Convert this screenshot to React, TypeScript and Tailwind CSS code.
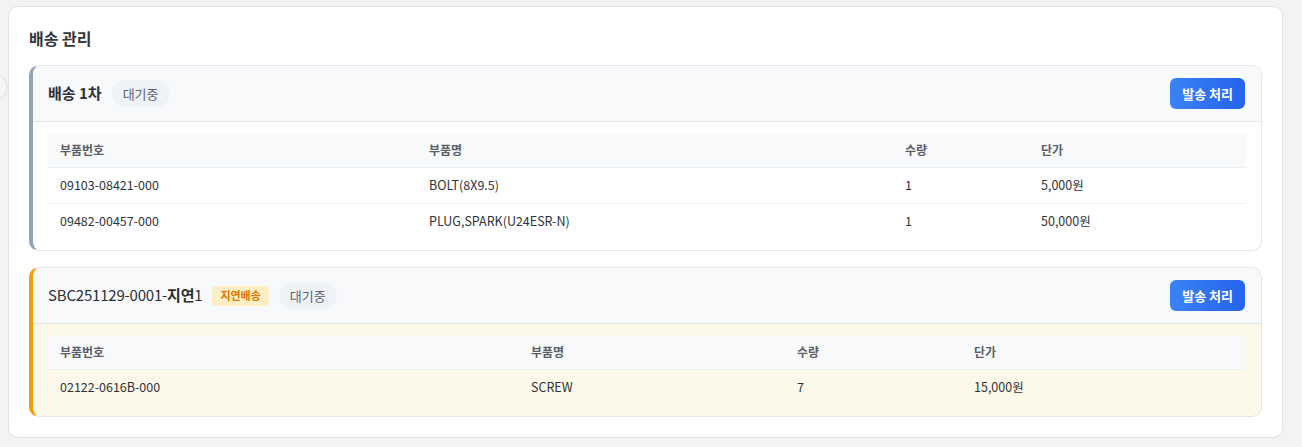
import React from 'react';

type Item = {
  partNo: string;
  name: string;
  qty: number;
  price: string;
};

type Shipment = {
  title: string;
  delayed?: boolean;
  cols: string[];
  items: Item[];
};

const shipments: Shipment[] = [
  {
    title: '배송 1차',
    cols: ['w-[369px]', 'w-[476px]', 'w-[136px]', ''],
    items: [
      { partNo: '09103-08421-000', name: 'BOLT(8X9.5)', qty: 1, price: '5,000원' },
      { partNo: '09482-00457-000', name: 'PLUG,SPARK(U24ESR-N)', qty: 1, price: '50,000원' }
    ]
  },
  {
    title: 'SBC251129-0001-지연1',
    delayed: true,
    cols: ['w-[471px]', 'w-[266px]', 'w-[177px]', ''],
    items: [{ partNo: '02122-0616B-000', name: 'SCREW', qty: 7, price: '15,000원' }]
  }
];

// hangul parts come out bold, latin/digits stay regular (as the fallback font does)
const Title = ({ text, mixed }: { text: string; mixed?: boolean }) => {
  if (!mixed) {
    return <span className="text-[15px] font-semibold text-[#2b2f36]">{text}</span>;
  }
  const parts = text.split(/([가-힣]+)/).filter(Boolean);
  return (
    <span className="text-[15px] text-[#2b2f36] tracking-[-0.2px]">
      {parts.map((p, i) => (
        <span key={i} className={/[가-힣]/.test(p) ? 'font-bold' : 'font-normal'}>
          {p}
        </span>
      ))}
    </span>
  );
};

const ShipmentCard = ({ s }: { s: Shipment }) => {
  return (
    <div
      className={
        'overflow-hidden rounded-[10px] border border-[#e3e6ea] border-l-4 ' +
        (s.delayed ? 'border-l-[#f59e0b] bg-[#fdf9ea]' : 'border-l-[#94a3b8] bg-white')
      }
    >
      {/* header */}
      <div className="flex h-[56px] items-center justify-between border-b border-[#e3e6ea] bg-[#f8f9fb] pl-[15px] pr-[16px]">
        <div className="flex items-center gap-[10px]">
          <Title text={s.title} mixed={s.delayed} />
          {s.delayed && (
            <span className="flex h-[20px] items-center rounded-[4px] bg-[#fdefc3] px-[8px] text-[11px] font-bold text-[#d97706]">
              지연배송
            </span>
          )}
          <span className="flex h-[27px] items-center rounded-full bg-[#eff2f7] px-[11px] text-[13px] text-[#5b6370]">
            대기중
          </span>
        </div>
        <button className="h-[31px] rounded-[6px] bg-gradient-to-r from-[#3b82f6] to-[#2563eb] px-[12px] text-[13px] font-bold text-white">
          발송 처리
        </button>
      </div>

      {/* items */}
      <div className="px-[15px] pt-[12px] pb-[11px]">
        <table className="w-full border-collapse text-left">
          <thead>
            <tr className="h-[33px] border-b border-[#edf0f3] bg-[#f8f9fb]">
              {['부품번호', '부품명', '수량', '단가'].map((h, i) => (
                <th key={h} className={'px-3 text-[12px] font-semibold text-[#5a5f66] ' + s.cols[i]}>
                  {h}
                </th>
              ))}
            </tr>
          </thead>
          <tbody>
            {s.items.map((it, idx) => (
              <tr
                key={it.partNo}
                className={
                  'h-[36px] text-[12.5px] text-[#2f3338] ' +
                  (idx < s.items.length - 1 ? 'border-b border-[#edf0f3]' : '')
                }
              >
                <td className="px-3">{it.partNo}</td>
                <td className="px-3">{it.name}</td>
                <td className="px-3">{it.qty}</td>
                <td className="px-3">{it.price}</td>
              </tr>
            ))}
          </tbody>
        </table>
      </div>
    </div>
  );
};

export default function App() {
  return (
    <div
      className="relative h-[447px] w-[1302px] overflow-hidden bg-[#f3f3f3] pt-[6px] pl-[8px]"
      style={{ fontFamily: '"Noto Sans CJK KR", "Noto Sans", sans-serif' }}
    >
      {/* collapsed side handle */}
      <div className="absolute top-[76px] left-[-12px] h-[22px] w-[18px] rounded-full bg-[#f7f7f7] shadow-[0_0_3px_rgba(0,0,0,0.18)]" />

      <div className="w-[1275px] rounded-[10px] border border-[#e2e2e2] bg-white px-[20px] pt-[19px] pb-[20px]">
        <h2 className="mb-[15px] text-[16px] leading-[24px] font-bold text-[#33373d]">배송 관리</h2>
        <div className="flex flex-col gap-[16px]">
          {shipments.map((s) => (
            <ShipmentCard key={s.title} s={s} />
          ))}
        </div>
      </div>
    </div>
  );
}
